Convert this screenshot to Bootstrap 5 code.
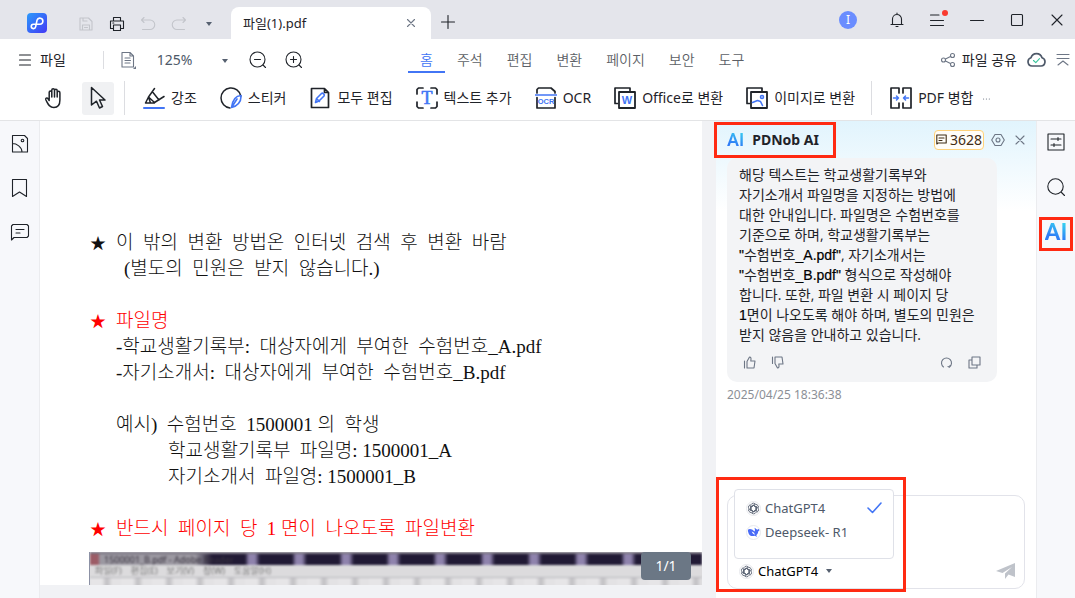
<!DOCTYPE html>
<html lang="ko">
<head>
<meta charset="utf-8">
<meta name="viewport" content="width=device-width, initial-scale=1">
<title>파일(1).pdf - PDNob</title>
<link href="https://cdn.jsdelivr.net/npm/bootstrap@5.3.0/dist/css/bootstrap.min.css" rel="stylesheet">
<style>
:root{--ui:"Noto Sans","Noto Sans CJK KR",sans-serif;--ink:#1f2329;--edge:#e4e5e9;--blue:#4275f5;--mark:#ff2a12}
body{font-family:var(--ui);font-size:13px;line-height:20px;color:var(--ink);background:#fff}
button,select,textarea{font:inherit;color:inherit;background:none;border:0;padding:0}
svg{display:block;flex:none;fill:none;stroke:currentColor;stroke-width:1.1;stroke-linecap:round;stroke-linejoin:round}
svg text{stroke:none;fill:var(--blue);font-weight:700;text-anchor:middle}
.acc{stroke:var(--blue)}
.ic{width:16px;height:16px}
.ic-lg{width:22px;height:22px}
.app{min-height:100vh}
.titlebar{height:39px;background:#e4e5eb}
.doc-tab{width:200px;height:32px;background:#fff;border-radius:8px 8px 0 0;padding:0 15px 0 12px;font-size:13px}
.faint{color:#c3c5cb}
.caret{width:0;height:0;border:3px solid transparent;border-top:4px solid #566070;border-bottom:0}
.avatar{width:18px;height:18px;border-radius:50%;background:#6a8dff;color:#fff;font-size:12px;line-height:18px}
.dot{position:absolute;top:-2px;right:-3px;width:6px;height:6px;border-radius:50%;background:#f93a2f}
.menubar{height:41px}
.vline{width:1px;background:#dcdde1}
.zoom-level{appearance:none;width:48px;color:#4e5969;font-size:14px}
.menu-tabs a{padding:11px 12px 3px;color:#5c5f66;text-decoration:none;height:34px;font-size:14px;font-weight:350}
.menu-tabs a.active{color:var(--blue);border-bottom:2px solid var(--blue)}
.tools{height:41px;border-bottom:1px solid #e3e4e6}
.tool{display:flex;align-items:center;gap:6px;white-space:nowrap;flex:none;font-size:14px;font-weight:400}
.tool-on{width:32px;height:33px;background:#f0f1f3;border-radius:3px}
.rail{width:40px;background:#f7f8fb;border-right:1px solid #ebecef;padding-top:13px;gap:24px}
.rail-end{width:39px;border-right:0;border-left:1px solid #ebecef;padding-top:11px;gap:25px}
.rail svg{width:20px;height:20px}
.viewer{background:#f1f2f5;padding:0 14px 13px 0}
.sheet{background:#fff;padding:109px 0 0 49px;color:#111;font-family:"Liberation Serif","Noto Sans CJK KR",serif;font-size:19px;font-weight:300;line-height:26px;white-space:pre-wrap;overflow:hidden}
.sheet p{margin:0 0 26px;padding-left:27px}
.sheet .star{display:inline-block;width:27px;margin-left:-27px;padding-left:1px;font-size:16px;line-height:20px}
.sheet .in-1{padding-left:8px}
.sheet .in-2{padding-left:52px}
.sheet .hot{color:#f00}
.scan{height:33px;margin-top:-16px;font-family:var(--ui);font-size:9px;line-height:12px;font-weight:400;background:#dcdbdd;border-left:1px solid #8c91a5;overflow:hidden}
.scan div{filter:blur(1px);white-space:nowrap}
.scan-title{height:13px;border-top:2px solid #77727f;color:#3a3440;padding-left:14px;background:linear-gradient(90deg,#9c5c66 0 8px,#9b98a1 10px 105px,#211a35 122px 150px,#0000 150px),repeating-linear-gradient(90deg,#211a35 0 14px,#8f83ad 18px 24px,#211a35 29px 47px)}
.scan-menu{height:12px;padding-left:5px;color:#777;gap:9px}
.scan-tools{height:10px;border-top:1px solid #b9b8bd;background:repeating-linear-gradient(90deg,#e6e5e7 0 12px,#c4c3c6 16px 18px,#e3e2e4 22px 31px)}
.page-no{position:absolute;right:25px;bottom:18px;width:50px;height:28px;border-radius:4px;background:#6b7785;color:#fff;font-size:14px;line-height:28px;text-align:center}
.ai{width:320px;background:linear-gradient(#e1f4fd,#fff 90px);padding:0 11px 9px}
.ai-head{height:37px}
.ai-logo{font-family:Roboto,"Liberation Sans",sans-serif;font-weight:600;font-size:18px;background:linear-gradient(200deg,#38dcf0,#2f7cf6 70%);-webkit-background-clip:text;background-clip:text;color:transparent}
.ai-name{font-size:14px;font-weight:700}
.credit{height:20px;width:50px;gap:3px;padding-left:1px;border:1px solid #ffd27a;border-radius:4px;background:#fffdf8;font-size:14px;line-height:18px;color:#3f2c14}
.grey{color:#6d7685}
.bubble{width:270px;background:#f3f4f6;border-radius:10px;padding:7px 12px 13px;font-size:14px;line-height:20px}
.bubble p{font-family:"Open Sans","Noto Sans CJK KR",sans-serif;font-weight:400;margin:0 0 11px;white-space:nowrap}
.bubble b{font-family:"Liberation Sans","Noto Sans CJK KR",sans-serif;font-weight:400;color:#000;-webkit-text-stroke:.2px #000}
.bubble svg{width:13px;height:13px}
.stamp{color:#8c8f96;font-size:12px}
.composer{height:94px;border:1px solid #e2e3ea;border-radius:10px;background:#fff;padding:8px 8px 7px}
.composer textarea{resize:none;outline:0}
.model-menu{position:absolute;left:6px;top:-7px;width:160px;height:70px;border:1px solid #dfe1e8;border-radius:4px;background:#fff;padding:6px 11px;font-size:13px;line-height:20px}
.model-menu button{height:24px;color:#4e5969}
.model{font-size:13px;color:#000}
.chip{width:15px;height:15px;border:1px solid #e8e9ed;border-radius:50%}
.redbox{position:absolute;border:3px solid var(--mark);pointer-events:none}
.rb-name{left:-2px;top:1px;width:122px;height:36px}
.rb-ai{left:-6px;top:-5px;width:34px;height:34px}
.rb-model{left:-12px;top:-19px;width:190px;height:115px}
</style>
</head>
<body>
<svg width="0" height="0" class="position-absolute" aria-hidden="true">
<defs>
<symbol id="gpt" viewBox="2 2 12 12"><g stroke="#596273" stroke-width=".8"><path id="petal" d="M8 5.200 10.600 6.700V10a2.600 2.600 0 0 1-3.900 2.600M8 5.200 5.300 6.800"/><use href="#petal" transform="rotate(60 8 8)"/><use href="#petal" transform="rotate(120 8 8)"/><use href="#petal" transform="rotate(180 8 8)"/><use href="#petal" transform="rotate(240 8 8)"/><use href="#petal" transform="rotate(300 8 8)"/></g></symbol>
</defs>
</svg>
<div class="app d-flex flex-column">
<header class="titlebar d-flex align-items-end">
  <div class="d-flex align-items-center h-100" style="width:231px">
    <svg style="margin:6px 0 0 27px" width="20" height="20" viewBox="0 0 20 20"><defs><linearGradient id="lg" x2="1" y2="1"><stop stop-color="#2b9bfb"/><stop offset="1" stop-color="#4338f5"/></linearGradient></defs><rect width="20" height="20" rx="4" fill="url(#lg)" stroke="none"/><path d="M8.600 13.800 10 7.300a3 3 0 1 1 2.900 3.900H6.300a2.200 2.200 0 1 0 2.300 2.600" stroke="#fff" stroke-width="1.600"/></svg>
    <div class="d-flex align-items-center mt-2" style="gap:15px;margin-left:31px">
      <button class="faint" aria-label="저장"><svg class="ic" viewBox="0 0 16 16"><path d="M2 2h8.500L14 5.500V14H2zM5 2v3h4M4.500 14V9h7v5M6.500 11.500h3"/></svg></button>
      <button aria-label="인쇄"><svg class="ic" viewBox="0 0 16 16"><path d="M4.500 5V1.500h7V5M4.500 12.500H1.500V5h13v7.500h-3M4.500 9h7v5.500h-7zM3.800 7h1"/></svg></button>
      <button class="faint" aria-label="실행 취소"><svg class="ic" viewBox="0 0 16 16"><path d="M4 1.500 1.500 4 4 6.500M1.500 4H10a4.700 4.700 0 0 1 0 9.500H2.500"/></svg></button>
      <button class="faint" aria-label="다시 실행"><svg class="ic" viewBox="0 0 16 16"><path d="m12 1.500 2.500 2.500L12 6.500M14.500 4H6a4.700 4.700 0 0 0 0 9.500h7.500"/></svg></button>
      <button class="caret ms-1" aria-label="더 보기"></button>
    </div>
  </div>
  <div class="doc-tab d-flex align-items-center justify-content-between"><span>파일(1).pdf</span><button class="grey" aria-label="탭 닫기"><svg width="10" height="10" viewBox="0 0 10 10"><path d="m1.500 1.500 7 7m0-7-7 7"/></svg></button></div>
  <button class="ms-2 mb-2" style="padding:2px" aria-label="새 탭"><svg width="14" height="14" viewBox="0 0 14 14"><path d="M7 .5v13M.5 7h13"/></svg></button>
  <div class="d-flex align-items-center h-100 ms-auto" style="padding-right:10px;gap:24px">
    <button class="avatar me-2">I</button>
    <button aria-label="알림"><svg class="ic" viewBox="0 0 16 16"><path d="M3.500 12V7a4.500 4.500 0 0 1 9 0v5M2 12.500h12M7 14.500h2M8 1v1"/></svg></button>
    <button class="position-relative" aria-label="메뉴"><svg class="ic" viewBox="0 0 16 16"><path d="M1.500 3H10M1.500 8.500h13M1.500 13.500h13"/></svg><span class="dot"></span></button>
    <button aria-label="최소화"><svg class="ic" viewBox="0 0 16 16"><path d="M1.500 8.500h13"/></svg></button>
    <button aria-label="최대화"><svg class="ic" viewBox="0 0 16 16"><rect x="2.500" y="2.500" width="11" height="11" rx="1"/></svg></button>
    <button aria-label="닫기"><svg class="ic" viewBox="0 0 16 16"><path d="m3 3 10 10m0-10L3 13"/></svg></button>
  </div>
</header>

<nav class="menubar d-flex align-items-center">
  <div class="d-flex align-items-center" style="width:408px;padding-left:18px">
    <button class="tool" style="gap:8px"><svg width="14" height="14" viewBox="0 0 14 14"><path d="M1.500 2h11m-11 5h11m-11 5h11"/></svg>파일</button>
    <span class="vline" style="height:18px;margin:0 16px 0 37px"></span>
    <button class="grey" aria-label="페이지 보기"><svg width="16" height="18" viewBox="0 0 16 18"><path d="M2 1.500h8L13.500 5v11H2zM10 1.500V5h3.500M5 7h5M5 9.500h5.500M5 12h5"/><path d="M16 15v3h-3z" fill="currentColor" stroke="none"/></svg></button>
    <select class="zoom-level" style="margin-left:21px" aria-label="확대 비율"><option>125%</option></select>
    <span class="caret" style="margin:3px 21px 0 17px"></span>
    <button style="margin-right:18px" aria-label="축소"><svg width="18" height="18" viewBox="0 0 18 18"><circle cx="8.500" cy="8.500" r="7.500"/><path d="M5.500 8.500h6m2.500 5.500 2.500 2.500"/></svg></button>
    <button aria-label="확대"><svg width="18" height="18" viewBox="0 0 18 18"><circle cx="8.500" cy="8.500" r="7.500"/><path d="M5.500 8.500h6m-3-3v6m5.500 2.500 2.500 2.500"/></svg></button>
  </div>
  <div class="menu-tabs d-flex align-self-start"><a href="#" class="active">홈</a><a href="#">주석</a><a href="#">편집</a><a href="#">변환</a><a href="#">페이지</a><a href="#">보안</a><a href="#">도구</a></div>
  <div class="d-flex align-items-center ms-auto" style="gap:10px;padding-right:5px">
    <button class="tool"><svg class="ic grey" viewBox="0 0 16 16"><circle cx="3.500" cy="8" r="2"/><circle cx="12.500" cy="3.500" r="2"/><circle cx="12.500" cy="12.500" r="2"/><path d="m5.500 7 5-2.500m-5 4.500 5 2.500"/></svg>파일 공유</button>
    <button class="grey" aria-label="클라우드"><svg width="19" height="16" viewBox="0 0 19 16"><path stroke="#4e5969" stroke-width="1.700" d="M5 14a4.200 4.200 0 0 1-1-8.200 5.700 5.700 0 0 1 11 0A4.200 4.200 0 0 1 14 14z"/><path stroke="#38c49b" d="m6.500 8.500 2.300 2.200 3.700-4"/></svg></button>
    <button class="grey" aria-label="리본 접기"><svg width="14" height="14" viewBox="0 0 14 14"><path d="M1 1.500h12M1 5.500h12M2 12l5-4 5 4"/></svg></button>
  </div>
</nav>

<div class="tools d-flex align-items-center">
  <div class="d-flex align-items-center" style="width:143px;padding:0 0 4px 43px;gap:17px">
    <button aria-label="손 도구"><svg class="ic-lg" viewBox="0 0 22 22"><path stroke-width="1.500" d="M6.200 12.500V5.200a1.300 1.300 0 0 1 2.600 0V10M8.800 5V3a1.300 1.300 0 0 1 2.700 0v7M11.500 3.700a1.300 1.300 0 0 1 2.700 0V10m0-4.300a1.300 1.300 0 0 1 2.700 0V13c0 5-2 7.500-6 7.500-5 0-6-4-8-7.500-.8-1.500 1-2.800 2-1.500l1.300 2"/></svg></button>
    <button class="tool-on d-flex align-items-center justify-content-center" aria-label="선택 도구"><svg width="18" height="24" viewBox="0 0 18 24"><path stroke-width="1.500" d="M2.500 1.500 16 14h-5.500l3 6.500-3 1.500-3-6.800L2.500 19z"/></svg></button>
    <span class="vline" style="height:34px;margin-left:-7px"></span>
  </div>
  <div class="d-flex align-items-center flex-grow-1 pb-1" style="gap:23px">
    <button class="tool"><svg class="ic-lg" viewBox="0 0 22 22"><path d="m2.500 16 3-6 6-8.500M5.500 10l6 5.500 9.500-6M10 5.500l6 7.500M2.500 16h9M5.500 10l2 6" stroke-width="1.500"/><path class="acc" stroke-width="2" d="M1 21h20"/></svg>강조</button>
    <button class="tool"><svg class="ic-lg" viewBox="0 0 22 22"><path stroke-width="1.500" d="M20.800 9A10 10 0 1 0 10 21"/><path class="acc" stroke-width="1.600" d="M21 8.500c-5 .3-8.500 4-9.500 12C17 19.500 21.500 15 21 8.500zM17 12l-5.500 8.500"/></svg>스티커</button>
    <button class="tool"><svg class="ic-lg" viewBox="0 0 22 22"><path stroke-width="1.700" d="M2.500 1.500h13l4 4v15h-17zM15.500 1.500v4h4"/><path class="acc" stroke-width="1.600" d="m6.500 15.500 1-4 5-5c1.500-1 3.500 1 2.500 2.500l-5 5zM7.500 11.500l3 3"/></svg>모두 편집</button>
    <button class="tool"><svg class="ic-lg" viewBox="0 0 22 22"><path stroke-width="1.700" d="M1 7V2.500L2.500 1H7m8 0h4.500L21 2.500V7m0 8v4.500L19.500 21H15m-8 0H2.500L1 19.500V15"/><text x="11" y="17" font-size="18" style="font-weight:400;stroke:var(--blue);stroke-width:.6" font-family="Liberation Serif">T</text></svg>텍스트 추가</button>
    <button class="tool"><svg class="ic-lg" viewBox="0 0 22 22"><path stroke-width="1.700" d="M2 6V2.500L3.500 1H16l4 3.500V6M2 10.500V21h18V10.500"/><path class="acc" stroke-width="1.600" d="M0 8h22"/><text x="11" y="17" font-size="7.500" font-family="Liberation Sans">OCR</text></svg>OCR</button>
    <button class="tool"><svg class="ic-lg" viewBox="0 0 22 22"><path stroke-width="1.700" d="M3.500 16.500H1V1h15v2.500"/><path stroke-width="1.800" d="M5 5h16v16H5z"/><text x="13" y="17" font-size="11" font-family="Liberation Sans">W</text></svg>Office로 변환</button>
    <button class="tool"><svg class="ic-lg" viewBox="0 0 22 22"><path stroke-width="1.700" d="M3.500 16.500H1V1h15v2.500"/><path stroke-width="1.800" d="M5 5h16v16H5z"/><g class="acc" stroke-width="1.600"><path d="m6.500 15.500 5-2 3 1 2 4"/><circle cx="16" cy="10" r="1.500"/></g></svg>이미지로 변환</button>
    <span class="vline" style="height:34px;margin:0 -5px 0 -7px"></span>
    <button class="tool"><svg class="ic-lg" viewBox="0 0 22 22"><path stroke-width="1.700" d="M9 6V1H1v20h8v-5m4-10V1h8v20h-8v-5"/><path class="acc" stroke-width="1.500" d="M3.500 11h5m-2-2 2 2-2 2m12-2h-5m2-2-2 2 2 2"/></svg>PDF 병합</button>
    <button class="grey" style="margin-left:-14px" aria-label="더 많은 도구"><svg width="9" height="9" viewBox="0 0 9 9"><path stroke-dasharray=".1 2.800" d="M1.500 5h6"/></svg></button>
  </div>
</div>

<main class="d-flex flex-grow-1">
  <aside class="rail d-flex flex-column align-items-center">
    <button aria-label="축소판"><svg viewBox="0 0 20 20"><path d="M2.500 1.500h12l3 3V18h-15zM2.500 9.500c4 0 9.500 3.500 9.500 8.500"/><circle cx="12.500" cy="6.500" r="1.300"/></svg></button>
    <button aria-label="책갈피"><svg viewBox="0 0 20 20"><path d="M2.500 1.500h14v17l-7-4.500-7 4.500z"/></svg></button>
    <button aria-label="주석"><svg viewBox="0 0 20 20"><path d="M1.500 18V4L3 2.500h14L18.500 4v10L17 15.500H4zM6 7.500h8M6 11h4"/></svg></button>
  </aside>
  <section class="viewer flex-grow-1 position-relative d-flex flex-column">
    <article class="sheet flex-grow-1"><p><span class="star">★</span>이  밖의  변환  방법온  인터넷  검색  후  변환  바람
<span class="in-1">(별도의  민원은  받지  않습니다.)</span></p><p><span class="hot"><span class="star">★</span>파일명</span>
-학교생활기록부:  대상자에게  부여한  수험번호_A.pdf
-자기소개서:  대상자에게  부여한  수험번호_B.pdf</p><p>예시)  수험번호  1500001 의  학생
<span class="in-2">학교생활기록부  파일명: 1500001_A</span>
<span class="in-2">자기소개서  파일영: 1500001_B</span></p><p class="hot"><span class="star">★</span>반드시  페이지  당  1 면이  나오도록  파일변환</p><div class="scan"><div class="scan-title">1500001_B.pdf - Adobe Reader</div><div class="scan-menu d-flex"><span>파일(F)</span><span>편집(E)</span><span>보기(V)</span><span>창(W)</span><span>도움말(H)</span></div><div class="scan-tools"></div></div></article>
    <span class="page-no">1/1</span>
  </section>
  <section class="ai d-flex flex-column flex-shrink-0 position-relative">
    <span class="redbox rb-name"></span>
    <div class="ai-head d-flex align-items-center">
      <span class="ai-logo">AI</span><span class="ai-name ms-2">PDNob AI</span>
      <span class="credit d-flex align-items-center ms-auto"><svg width="11" height="11" viewBox="0 0 11 11"><path d="M.8 10V1h9.400v8H2zM3 4h5M3 6.500h3"/></svg>3628</span>
      <button class="grey" style="margin:0 10px 0 7px" aria-label="설정"><svg width="14" height="14" viewBox="0 0 14 14"><path d="M4 1.500h6L13.300 7 10 12.500H4L.7 7z"/><circle cx="7" cy="7" r="2"/></svg></button>
      <button class="grey" aria-label="패널 닫기"><svg width="10" height="10" viewBox="0 0 10 10"><path d="m1 1 8 8m0-8L1 9"/></svg></button>
    </div>
    <div class="bubble">
      <p>해당 텍스트는 학교생활기록부와<br>자기소개서 파일명을 지정하는 방법에<br>대한 안내입니다. 파일명은 수험번호를<br>기준으로 하며, 학교생활기록부는<br><b>"</b>수험번호<b>_A.pdf"</b>, 자기소개서는<br><b>"</b>수험번호<b>_B.pdf"</b> 형식으로 작성해야<br>합니다. 또한, 파일 변환 시 페이지 당<br><b>1</b>면이 나오도록 해야 하며, 별도의 민원은<br>받지 않음을 안내하고 있습니다.</p>
      <div class="d-flex align-items-center grey px-1" style="gap:15px">
        <button aria-label="좋아요"><svg viewBox="0 0 13 13"><path d="M1.500 5v7M4 12V5.500L6.500 1c1.500 0 1.800 1 1.300 4H12l-1 7z"/></svg></button>
        <button aria-label="싫어요"><svg viewBox="0 0 13 13"><path d="M1.500 1v6.500M4 1v6.500L6.500 12c1.500 0 1.800-1 1.300-4H12l-1-7z"/></svg></button>
        <button class="ms-auto" aria-label="다시 생성"><svg viewBox="0 0 13 13"><path d="M3.500 11a5 5 0 1 1 6 0m-1.500-.5 1.500.7.5-1.700"/></svg></button>
        <button aria-label="복사"><svg viewBox="0 0 13 13"><path d="M4 1h8v8H4zM4 4H1v8h8V9"/></svg></button>
      </div>
    </div>
    <time class="stamp" style="margin-top:3px">2025/04/25 18:36:38</time>
    <div class="composer d-flex flex-column position-relative mt-auto">
      <textarea class="flex-grow-1 w-100" aria-label="메시지"></textarea>
      <div class="d-flex align-items-center justify-content-between">
        <button class="model d-flex align-items-center" style="gap:4px;padding-left:3px" aria-expanded="true"><svg class="chip"><use href="#gpt"/></svg>ChatGPT4<span class="caret ms-1"></span></button>
        <button class="ms-auto" aria-label="보내기"><svg width="20" height="16" viewBox="0 0 20 16"><path d="M19 0v14l-6.500-2.500L9 16v-5.500L16 4l-9.500 6L0 8z" fill="#bfc3ca" stroke="none"/></svg></button>
      </div>
      <div class="model-menu">
        <button class="d-flex align-items-center w-100" style="gap:4px"><svg class="chip"><use href="#gpt"/></svg>ChatGPT4<svg class="acc ms-auto" width="15" height="12" viewBox="0 0 15 12"><path stroke-width="1.600" d="m1 6 4.500 4.500L14 1"/></svg></button>
        <button class="d-flex align-items-center w-100" style="gap:4px"><svg class="chip" viewBox="1 2 14 14"><path fill="#4a6cf7" stroke="none" d="M2 6c1-1 3-1 5 0l2 2c1-1 .5-2.500 0-4 1.500.5 2 1.500 3 2l3-1.500c0 2-1 3-2 3.500 0 2-1 3-2 4l1 1.500-3-1C5 14 2 11 2 6zm4 2c1 2 2 3 3.500 3.500C9 9.500 8 8.500 6 8z"/></svg>Deepseek- R1</button>
      </div>
      <span class="redbox rb-model"></span>
    </div>
  </section>
  <aside class="rail rail-end d-flex flex-column align-items-center">
    <button aria-label="속성"><svg viewBox="0 0 20 20"><path d="M2 2h16v16H2zM5 7h10M5 13h10M12 5.500v3M8 11.500v3"/></svg></button>
    <button aria-label="검색"><svg viewBox="0 0 20 20"><circle cx="9.500" cy="9.500" r="7.700"/><path d="m15.500 15.500 3 3"/></svg></button>
    <button class="position-relative ai-logo" style="font-size:24px"><span>AI</span><span class="redbox rb-ai"></span></button>
  </aside>
</main>
</div>
<script src="https://cdn.jsdelivr.net/npm/bootstrap@5.3.0/dist/js/bootstrap.bundle.min.js"></script>
</body>
</html>
